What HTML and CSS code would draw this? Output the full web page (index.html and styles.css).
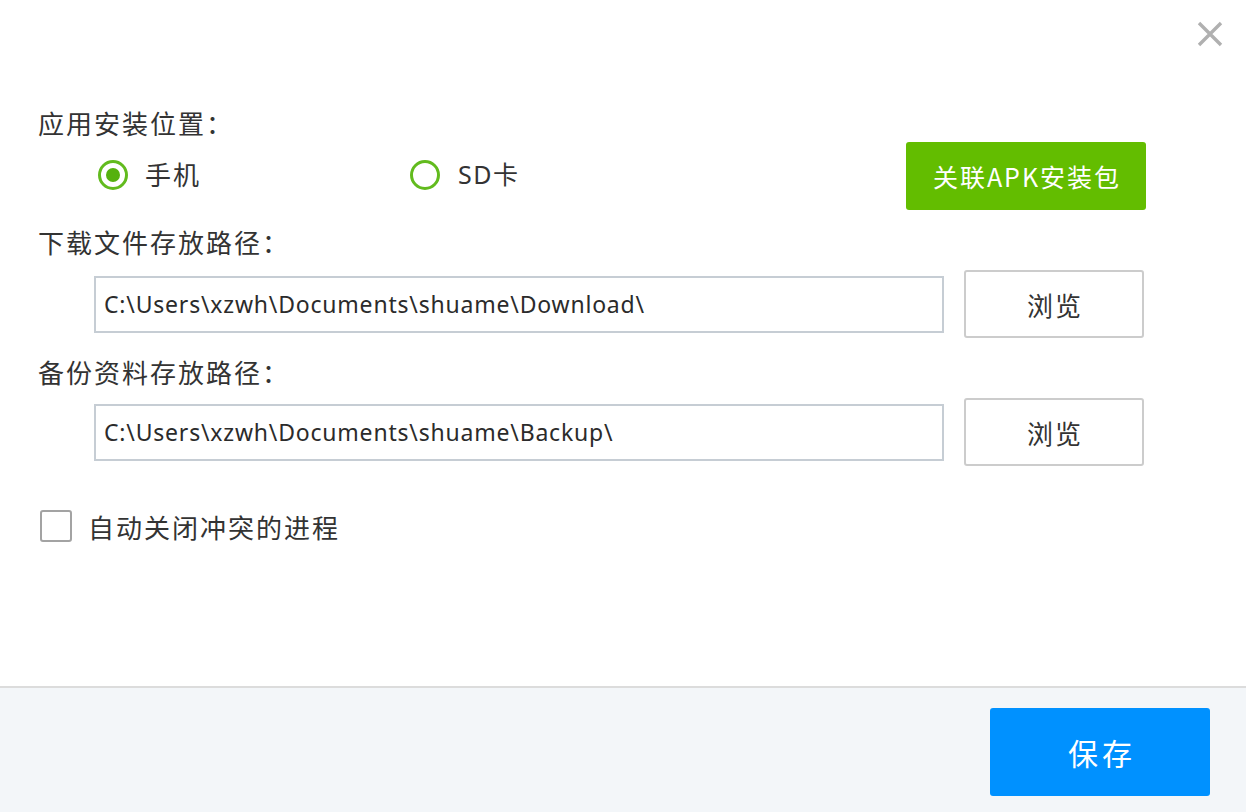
FILE: index.html
```html
<!DOCTYPE html>
<html lang="zh-CN">
<head>
<meta charset="utf-8">
<title>设置</title>
<link rel="stylesheet" href="styles.css">
</head>
<body>
<div class="dialog">
  <button class="close" aria-label="关闭">
    <svg width="26" height="26" viewBox="0 0 26 26"><path d="M2 2L24 24M24 2L2 24" stroke="#b0b0b0" stroke-width="3.4" fill="none"/></svg>
  </button>
  <div class="main">
    <div class="label">应用安装位置：</div>
    <div class="radio-row">
      <label class="radio checked"><span class="ring"><span class="dot"></span></span><span class="rtext">手机</span></label>
      <label class="radio sd"><span class="ring"></span><span class="rtext">SD卡</span></label>
      <button class="green-btn">关联APK安装包</button>
    </div>
    <div class="label label2">下载文件存放路径：</div>
    <div class="path-row">
      <div class="input">C:\Users\xzwh\Documents\shuame\Download\</div>
      <button class="browse">浏览</button>
    </div>
    <div class="label label3">备份资料存放路径：</div>
    <div class="path-row row2">
      <div class="input">C:\Users\xzwh\Documents\shuame\Backup\</div>
      <button class="browse">浏览</button>
    </div>
    <label class="check-row"><span class="box"></span><span class="ctext">自动关闭冲突的进程</span></label>
  </div>
  <div class="footer">
    <button class="save">保存</button>
  </div>
</div>
</body>
</html>
```

FILE: styles.css
```css
* { box-sizing: border-box; }
html, body { margin: 0; padding: 0; }
body {
  width: 1246px;
  height: 812px;
  background: #ffffff;
  font-family: "Noto Sans CJK SC", "Noto Sans", sans-serif;
  color: #333333;
  overflow: hidden;
}
button { font-family: inherit; cursor: pointer; }
.dialog {
  position: relative;
  width: 1246px;
  height: 812px;
  display: flex;
  flex-direction: column;
}
.close {
  position: absolute;
  top: 21px;
  right: 23px;
  width: 26px;
  height: 26px;
  padding: 0;
  border: 0;
  background: transparent;
  display: block;
}
.close svg { display: block; }
.main {
  height: 686px;
  padding: 108px 0 0 38px;
}
.label {
  font-size: 26px;
  letter-spacing: 2px;
  line-height: 30px;
  height: 30px;
  color: #333;
}
.radio-row {
  margin-top: 4px;
  height: 68px;
  display: flex;
  align-items: center;
  padding-left: 60px;
  padding-right: 100px;
}
.radio {
  display: flex;
  align-items: center;
  font-size: 26px;
  letter-spacing: 2px;
  line-height: 30px;
}
.ring {
  width: 30px;
  height: 30px;
  border: 3px solid #62bb1e;
  border-radius: 50%;
  display: flex;
  align-items: center;
  justify-content: center;
  margin-top: -2px;
}
.rtext { margin-top: -4px; margin-left: 17px; }
.dot {
  width: 14px;
  height: 14px;
  border-radius: 50%;
  background: #55b10e;
}
.radio.sd { margin-left: 209px; }
.radio.sd .rtext { margin-left: 18px; font-family: "Noto Sans", "Noto Sans CJK SC", sans-serif; letter-spacing: 1.5px; font-size: 25px; }
.green-btn {
  margin-left: auto;
  width: 240px;
  height: 68px;
  border: 0;
  border-radius: 3px;
  background: #63bd00;
  color: #ffffff;
  font-size: 25px;
  letter-spacing: 2px;
  padding: 0 0 0 2px;
}
.label2 { margin-top: 17px; }
.path-row {
  margin-top: 13px;
  height: 68px;
  display: flex;
  align-items: center;
  padding-left: 56px;
}
.input {
  width: 850px;
  height: 57px;
  border: 2px solid #c6cdd4;
  padding-left: 8px;
  display: flex;
  align-items: center;
  font-family: "Noto Sans", "Noto Sans CJK SC", sans-serif;
  font-size: 23px;
  color: #2b2b2b;
  letter-spacing: 0.8px;
}
.browse {
  margin-left: 20px;
  width: 180px;
  height: 68px;
  border: 2px solid #cccccc;
  border-radius: 3px;
  background: #ffffff;
  color: #333;
  font-size: 26px;
  letter-spacing: 2px;
  padding: 0 0 0 2px;
}
.label3 { margin-top: 19px; }
.row2 { margin-top: 11px; }
.check-row {
  margin-top: 44px;
  margin-left: 2px;
  display: flex;
  align-items: center;
  height: 32px;
}
.box {
  width: 32px;
  height: 32px;
  border: 2px solid #a3a3a3;
  border-radius: 3px;
  background: #fff;
}
.ctext {
  margin-left: 16px;
  font-size: 26px;
  letter-spacing: 2px;
}
.footer {
  flex: 1;
  border-top: 2px solid #dcdcdc;
  background: #f3f6f9;
  display: flex;
  justify-content: flex-end;
  align-items: flex-start;
  padding: 20px 36px 0 0;
}
.save {
  width: 220px;
  height: 88px;
  border: 0;
  border-radius: 3px;
  background: #0091ff;
  color: #ffffff;
  font-size: 30px;
  letter-spacing: 4px;
  padding: 0 0 0 4px;
}
```
